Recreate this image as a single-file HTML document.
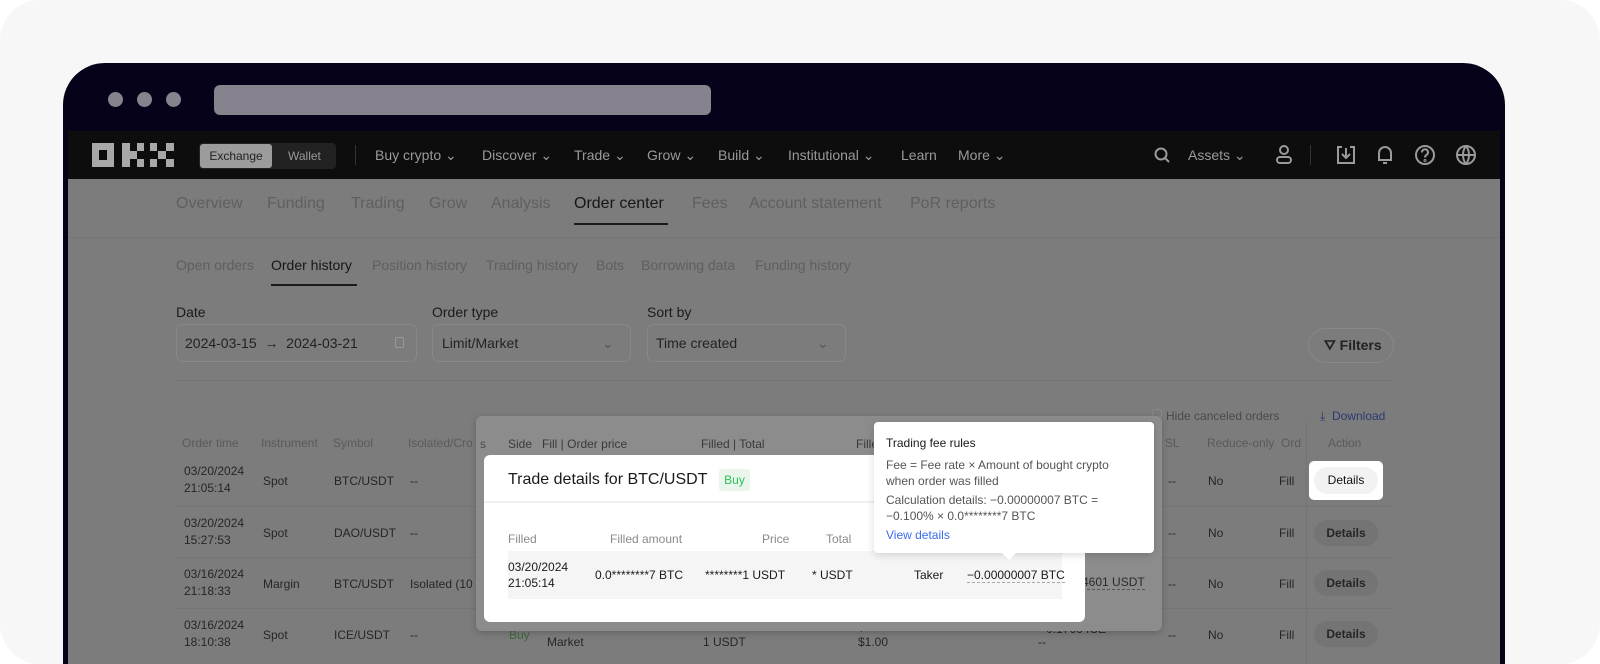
<!DOCTYPE html>
<html><head><meta charset="utf-8"><style>
*{margin:0;padding:0;box-sizing:border-box}
html,body{width:1600px;height:664px;overflow:hidden}
body{background:#fff;font-family:"Liberation Sans",sans-serif;position:relative}
.a{position:absolute;white-space:nowrap}
#card{position:absolute;left:0;top:0;width:1600px;height:664px;background:#f7f7f7;border-radius:40px;overflow:hidden}
#frame{position:absolute;left:63px;top:63px;width:1442px;height:601px;background:#05021a;border-radius:42px 42px 0 0}
.dot{position:absolute;top:92px;width:15px;height:15px;border-radius:50%;background:#86828e}
#url{position:absolute;left:214px;top:85px;width:497px;height:30px;border-radius:6px;background:#86828e}
#screen{position:absolute;left:68px;top:131px;width:1432px;height:533px;background:#7c7c7c;overflow:hidden}
#nav{position:absolute;left:0;top:0;width:1432px;height:48px;background:#0d0d0d}
.nv{color:#9a9a9a;font-size:14px;top:16px}
.tab{font-size:16px;color:#5f5f5f;top:64px}
.st{font-size:14px;color:#5f5f5f;top:126px}
.lbl{font-size:14px;color:#1a1a1a;top:173px}
.box{position:absolute;top:193px;height:38px;border:1px solid #888;border-radius:7px}
.bx{font-size:14px;color:#222;top:204px}
.th{font-size:12px;color:#5a5a5a;top:305px}
.td{font-size:12px;color:#262626}
.det{position:absolute;width:64px;height:26px;border-radius:13px;background:#747474;font-size:12px;color:#262626;text-align:center;line-height:26px;font-weight:bold}
</style></head><body>
<div id="card">
<div id="frame"></div>
<div class="dot" style="left:108px"></div><div class="dot" style="left:137px"></div><div class="dot" style="left:166px"></div>
<div id="url"></div>
<div id="screen">
 <div id="nav">
  <svg class="a" style="left:24px;top:12px" width="82" height="24" viewBox="0 0 82 24" fill="#a8a8a8"><rect x="0" y="0" width="22" height="24"/><rect x="7" y="7" width="8" height="10" fill="#0d0d0d"/><rect x="30" y="0" width="8" height="24"/><rect x="38" y="8" width="7" height="8"/><rect x="45" y="0" width="7" height="8"/><rect x="45" y="16" width="7" height="8"/><rect x="58" y="0" width="7" height="8"/><rect x="74" y="0" width="8" height="8"/><rect x="66" y="8" width="8" height="8"/><rect x="58" y="16" width="7" height="8"/><rect x="74" y="16" width="8" height="8"/></svg>
  <div class="a" style="left:131px;top:12px;width:137px;height:26px;background:#222;border-radius:4px"></div>
  <div class="a" style="left:132px;top:13px;width:72px;height:24px;background:#9c9c9c;border-radius:3px;color:#222;font-size:12px;text-align:center;line-height:24px">Exchange</div>
  <div class="a" style="left:220px;top:18px;color:#999;font-size:12px">Wallet</div>
  <div class="a" style="left:287px;top:14px;width:1px;height:20px;background:#333"></div>
  <div class="a nv" style="left:307px">Buy crypto ⌄</div>
  <div class="a nv" style="left:414px">Discover ⌄</div>
  <div class="a nv" style="left:506px">Trade ⌄</div>
  <div class="a nv" style="left:579px">Grow ⌄</div>
  <div class="a nv" style="left:650px">Build ⌄</div>
  <div class="a nv" style="left:720px">Institutional ⌄</div>
  <div class="a nv" style="left:833px">Learn</div>
  <div class="a nv" style="left:890px">More ⌄</div>
  <svg class="a" style="left:1086px;top:16px" width="16" height="16" viewBox="0 0 16 16" fill="none" stroke="#9a9a9a" stroke-width="2"><circle cx="7" cy="7" r="5.5"/><path d="M11 11l4 4"/></svg>
  <div class="a nv" style="left:1120px">Assets ⌄</div>
  <svg class="a" style="left:1207px;top:14px" width="18" height="20" viewBox="0 0 18 20" fill="none" stroke="#9a9a9a" stroke-width="2"><circle cx="9" cy="5" r="4"/><rect x="2" y="12" width="14" height="6" rx="3"/></svg>
  <div class="a" style="left:1242px;top:14px;width:1px;height:20px;background:#333"></div>
  <svg class="a" style="left:1268px;top:14px" width="20" height="20" viewBox="0 0 20 20" fill="none" stroke="#9a9a9a" stroke-width="2"><path d="M6 2H2v16h16V2h-4M10 3v10M6 9l4 4 4-4"/></svg>
  <svg class="a" style="left:1308px;top:14px" width="18" height="20" viewBox="0 0 18 20" fill="none" stroke="#9a9a9a" stroke-width="2"><path d="M3 15V8a6 6 0 0112 0v7H2h14M7 18h4"/></svg>
  <svg class="a" style="left:1346px;top:13px" width="22" height="22" viewBox="0 0 22 22" fill="none" stroke="#9a9a9a" stroke-width="2"><circle cx="11" cy="11" r="9"/><path d="M8 8.5a3 3 0 115 2c-1.5 1-2 1.5-2 3"/><circle cx="11" cy="16.5" r=".5"/></svg>
  <svg class="a" style="left:1387px;top:13px" width="22" height="22" viewBox="0 0 22 22" fill="none" stroke="#9a9a9a" stroke-width="2"><circle cx="11" cy="11" r="9"/><path d="M2 11h18M11 2c-4 5-4 13 0 18M11 2c4 5 4 13 0 18"/></svg>
 </div>
 <div class="a tab" style="left:108px">Overview</div>
 <div class="a tab" style="left:199px">Funding</div>
 <div class="a tab" style="left:283px">Trading</div>
 <div class="a tab" style="left:361px">Grow</div>
 <div class="a tab" style="left:423px">Analysis</div>
 <div class="a tab" style="left:506px;color:#161616">Order center</div>
 <div class="a" style="left:506px;top:92px;width:94px;height:2px;background:#1a1a1a"></div>
 <div class="a tab" style="left:624px">Fees</div>
 <div class="a tab" style="left:681px">Account statement</div>
 <div class="a tab" style="left:842px">PoR reports</div>
 <div class="a" style="left:0;top:106px;width:1432px;height:1px;background:#747474"></div>
 <div class="a st" style="left:108px">Open orders</div>
 <div class="a st" style="left:203px;color:#161616">Order history</div>
 <div class="a" style="left:203px;top:153px;width:86px;height:2px;background:#1a1a1a"></div>
 <div class="a st" style="left:304px">Position history</div>
 <div class="a st" style="left:418px">Trading history</div>
 <div class="a st" style="left:528px">Bots</div>
 <div class="a st" style="left:573px">Borrowing data</div>
 <div class="a st" style="left:687px">Funding history</div>
 <div class="a lbl" style="left:108px">Date</div>
 <div class="a lbl" style="left:364px">Order type</div>
 <div class="a lbl" style="left:579px">Sort by</div>
 <div class="box" style="left:108px;width:241px"></div>
 <div class="a bx" style="left:117px">2024-03-15 &nbsp;→&nbsp; 2024-03-21</div>
 <div class="a" style="left:327px;top:206px;width:9px;height:11px;border:1px solid #999;border-radius:2px"></div>
 <div class="box" style="left:364px;width:199px"></div>
 <div class="a bx" style="left:374px">Limit/Market</div>
 <div class="a bx" style="left:534px;color:#555">⌄</div>
 <div class="box" style="left:579px;width:199px"></div>
 <div class="a bx" style="left:588px">Time created</div>
 <div class="a bx" style="left:749px;color:#555">⌄</div>
 <div class="a" style="left:1240px;top:197px;width:86px;height:35px;border:1px solid #888;border-radius:18px"></div>
 <div class="a" style="left:1256px;top:206px;font-size:14px;color:#222;font-weight:bold">⛛ Filters</div>
 <div class="a" style="left:108px;top:249px;width:1218px;height:1px;background:#747474"></div>
 <div class="a" style="left:1084px;top:278px;width:10px;height:10px;border:1px solid #888;border-radius:2px"></div>
 <div class="a" style="left:1098px;top:278px;font-size:12px;color:#4a4a4a">Hide canceled orders</div>
 <div class="a" style="left:1252px;top:278px;font-size:12px;color:#2b3a6e">⤓ &nbsp;Download</div>
 <div class="a th" style="left:114px">Order time</div>
 <div class="a th" style="left:193px">Instrument</div>
 <div class="a th" style="left:265px">Symbol</div>
 <div class="a th" style="left:340px">Isolated/Cro</div>
 <div class="a th" style="left:1072px">TP | SL</div>
 <div class="a th" style="left:1139px">Reduce-only</div>
 <div class="a th" style="left:1213px">Ord</div>
 <div class="a th" style="left:1260px">Action</div>
 <div class="a" style="left:1238px;top:290px;width:1px;height:260px;background:#747474"></div>
 <div class="a td" style="left:116px;top:332px;line-height:17px">03/20/2024<br>21:05:14</div>
 <div class="a td" style="left:195px;top:343px">Spot</div><div class="a td" style="left:266px;top:343px">BTC/USDT</div><div class="a td" style="left:342px;top:343px">--</div>
 <div class="a td" style="left:116px;top:384px;line-height:17px">03/20/2024<br>15:27:53</div>
 <div class="a td" style="left:195px;top:395px">Spot</div><div class="a td" style="left:266px;top:395px">DAO/USDT</div><div class="a td" style="left:342px;top:395px">--</div>
 <div class="a td" style="left:116px;top:435px;line-height:17px">03/16/2024<br>21:18:33</div>
 <div class="a td" style="left:195px;top:446px">Margin</div><div class="a td" style="left:266px;top:446px">BTC/USDT</div><div class="a td" style="left:342px;top:446px">Isolated (10</div>
 <div class="a td" style="left:116px;top:486px;line-height:17px">03/16/2024<br>18:10:38</div>
 <div class="a td" style="left:195px;top:497px">Spot</div><div class="a td" style="left:266px;top:497px">ICE/USDT</div><div class="a td" style="left:342px;top:497px">--</div>
 <div class="a" style="left:108px;top:375px;width:1218px;height:1px;background:#757575"></div>
 <div class="a" style="left:108px;top:426px;width:1218px;height:1px;background:#757575"></div>
 <div class="a" style="left:108px;top:477px;width:1218px;height:1px;background:#757575"></div>
 <div class="a td" style="left:1100px;top:343px">--</div><div class="a td" style="left:1140px;top:343px">No</div><div class="a td" style="left:1211px;top:343px">Fill</div>
 <div class="a td" style="left:1100px;top:395px">--</div><div class="a td" style="left:1140px;top:395px">No</div><div class="a td" style="left:1211px;top:395px">Fill</div><div class="det" style="left:1246px;top:389px">Details</div>
 <div class="a td" style="left:1100px;top:446px">--</div><div class="a td" style="left:1140px;top:446px">No</div><div class="a td" style="left:1211px;top:446px">Fill</div><div class="det" style="left:1246px;top:439px">Details</div>
 <div class="a td" style="left:1100px;top:497px">--</div><div class="a td" style="left:1140px;top:497px">No</div><div class="a td" style="left:1211px;top:497px">Fill</div><div class="det" style="left:1246px;top:490px">Details</div>
 <div class="a td" style="left:974px;top:491px">-0.1766 ICE</div>
 <div class="a td" style="left:441px;top:497px;color:#3a6a3a">Buy</div>
 <div class="a td" style="left:479px;top:489px">0.0057</div><div class="a td" style="left:479px;top:504px">Market</div>
 <div class="a td" style="left:635px;top:489px">177 ICE</div><div class="a td" style="left:635px;top:504px">1 USDT</div>
 <div class="a td" style="left:790px;top:489px">$1.00</div><div class="a td" style="left:790px;top:504px">$1.00</div>
 <div class="a td" style="left:970px;top:504px">--</div>
 <div class="a" style="left:408px;top:285px;width:686px;height:215px;background:#8c8c8c;border-radius:6px;box-shadow:0 2px 8px rgba(0,0,0,.2)"></div>
 <div class="a" style="left:412px;top:306px;font-size:12px;color:#4a4a4a">s</div>
 <div class="a" style="left:440px;top:306px;font-size:12px;color:#3a3a3a">Side &nbsp;&nbsp;Fill | Order price</div>
 <div class="a" style="left:633px;top:306px;font-size:12px;color:#3a3a3a">Filled | Total</div>
 <div class="a" style="left:788px;top:306px;font-size:12px;color:#3a3a3a">Fille</div>
 <div class="a" style="left:1014px;top:444px;font-size:12px;color:#2a2a2a;border-bottom:1px dashed #555">4601 USDT</div>
 <div class="a" style="left:416px;top:324px;width:601px;height:167px;background:#fff;border-radius:6px">
  <div class="a" style="left:24px;top:16px;font-size:16px;color:#1a1a1a">Trade details for BTC/USDT</div>
  <div class="a" style="left:235px;top:14px;width:31px;height:22px;background:#eaf6ec;border-radius:3px;color:#2fbf5a;font-size:12px;line-height:22px;text-align:center">Buy</div>
  <div class="a" style="left:0;top:46px;width:601px;height:2px;background:#f0f0f0"></div>
  <div class="a" style="left:24px;top:77px;font-size:12px;color:#8a8a8a">Filled</div>
  <div class="a" style="left:126px;top:77px;font-size:12px;color:#8a8a8a">Filled amount</div>
  <div class="a" style="left:278px;top:77px;font-size:12px;color:#8a8a8a">Price</div>
  <div class="a" style="left:342px;top:77px;font-size:12px;color:#8a8a8a">Total</div>
  <div class="a" style="left:24px;top:96px;width:554px;height:48px;background:#f5f5f5"></div>
  <div class="a" style="left:24px;top:104px;font-size:12px;color:#1a1a1a;line-height:16px">03/20/2024<br>21:05:14</div>
  <div class="a" style="left:111px;top:113px;font-size:12px;color:#1a1a1a">0.0********7 BTC</div>
  <div class="a" style="left:221px;top:113px;font-size:12px;color:#1a1a1a">********1 USDT</div>
  <div class="a" style="left:328px;top:113px;font-size:12px;color:#1a1a1a">* USDT</div>
  <div class="a" style="left:430px;top:113px;font-size:12px;color:#1a1a1a">Taker</div>
  <div class="a" style="left:483px;top:113px;font-size:12px;color:#1a1a1a;border-bottom:1px dashed #aaa">−0.00000007 BTC</div>
 </div>
 <div class="a" style="left:806px;top:291px;width:280px;height:131px;background:#fff;border-radius:4px;box-shadow:0 2px 8px rgba(0,0,0,.15)">
  <div class="a" style="left:12px;top:14px;font-size:12px;color:#1a1a1a">Trading fee rules</div>
  <div class="a" style="left:12px;top:35px;font-size:12px;color:#555;line-height:16px">Fee = Fee rate × Amount of bought crypto<br>when order was filled</div>
  <div class="a" style="left:12px;top:70px;font-size:12px;color:#555;line-height:16px">Calculation details: −0.00000007 BTC =<br>−0.100% × 0.0********7 BTC</div>
  <div class="a" style="left:12px;top:106px;font-size:12px;color:#3b6cf0">View details</div>
  <div class="a" style="left:128px;top:131px;width:0;height:0;border-left:7px solid transparent;border-right:7px solid transparent;border-top:7px solid #fff"></div>
 </div>
 <div class="a" style="left:1241px;top:330px;width:74px;height:39px;background:#fff;border-radius:5px">
  <div class="a" style="left:5px;top:6px;width:64px;height:27px;border-radius:14px;background:#f2f2f2;font-size:12px;color:#111;text-align:center;line-height:27px">Details</div>
 </div>
</div>
</div>
</body></html>
